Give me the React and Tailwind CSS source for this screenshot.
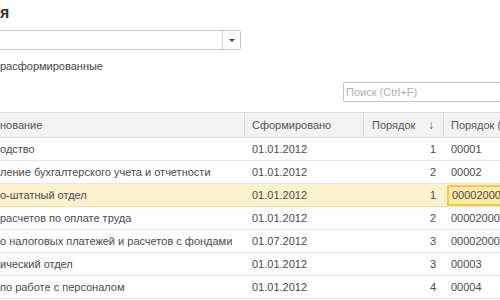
const rows = [
  { name: "одство", date: "01.01.2012", ord: "1", code: "00001" },
  { name: "ление бухгалтерского учета и отчетности", date: "01.01.2012", ord: "2", code: "00002" },
  { name: "о-штатный отдел", date: "01.01.2012", ord: "1", code: "00002000", active: true },
  { name: "расчетов по оплате труда", date: "01.01.2012", ord: "2", code: "00002000" },
  { name: "о налоговых платежей и расчетов с фондами", date: "01.07.2012", ord: "3", code: "00002000" },
  { name: "ический отдел", date: "01.01.2012", ord: "3", code: "00003" },
  { name: "по работе с персоналом", date: "01.01.2012", ord: "4", code: "00004" },
];

export default function App() {
  return (
    <div className="w-[500px] h-[300px] overflow-hidden bg-white text-[#4a4a4a] font-['Liberation_Sans',Arial,sans-serif]">
      {/* Title */}
      <div className="pt-[3px] h-[30px] text-[16px] leading-[20px] font-bold text-[#333]">я</div>

      {/* Combo */}
      <div className="flex h-[20px] w-[241px] border border-[#c8c8c8] border-l-0 rounded-r-[2px]">
        <div className="flex-1" />
        <div className="w-[18px] border-l border-[#d4d4d4] flex items-center justify-center">
          <span className="block w-0 h-0 border-l-[3px] border-r-[3px] border-t-[3px] border-l-transparent border-r-transparent border-t-[#444]" />
        </div>
      </div>

      {/* Checkbox label */}
      <div className="mt-[7px] h-[18px] text-[11px] leading-[18px] text-[#444]">расформированные</div>

      {/* Search */}
      <div className="mt-[7px] flex justify-end">
        <div className="w-[157px] h-[20px] border border-[#c8c8c8] border-r-0 rounded-l-[2px] flex items-center pl-[2px] text-[11px] text-[#b0b0b0]">
          Поиск (Ctrl+F)
        </div>
      </div>

      {/* Table */}
      <div className="mt-[10px] text-[11px]">
        <div className="grid grid-cols-[245px_119px_80px_1fr] h-[26px] bg-[#f2f2f2] border-t border-b border-[#dcdcdc] text-[#555]">
          <div className="flex items-center border-r border-[#d8d8d8]">нование</div>
          <div className="flex items-center pl-[7px] border-r border-[#d8d8d8]">Сформировано</div>
          <div className="flex items-center pl-[8px] pr-[9px] justify-between border-r border-[#d8d8d8]">
            <span>Порядок</span>
            <span className="text-[12px]">↓</span>
          </div>
          <div className="flex items-center pl-[7px] whitespace-nowrap overflow-hidden">Порядок (</div>
        </div>
        {rows.map((r, i) => (
          <div
            key={i}
            className={
              "grid grid-cols-[245px_119px_80px_1fr] h-[23px] border-b " +
              (r.active ? "bg-[#fbf1cc] border-[#f1e2ad]" : "border-[#e6e6e6]")
            }
          >
            <div className="flex items-center whitespace-nowrap overflow-hidden">{r.name}</div>
            <div className="flex items-center pl-[7px]">{r.date}</div>
            <div className="flex items-center justify-end pr-[8px]">{r.ord}</div>
            {r.active ? (
              <div className="flex items-center py-[1px] pl-[3px]">
                <div className="h-full w-full flex items-center pl-[3px] border-2 border-r-0 border-[#f2c94c] bg-[#fce9a8] whitespace-nowrap overflow-hidden">
                  {r.code}
                </div>
              </div>
            ) : (
              <div className="flex items-center pl-[7px] whitespace-nowrap overflow-hidden">{r.code}</div>
            )}
          </div>
        ))}
      </div>
    </div>
  );
}
